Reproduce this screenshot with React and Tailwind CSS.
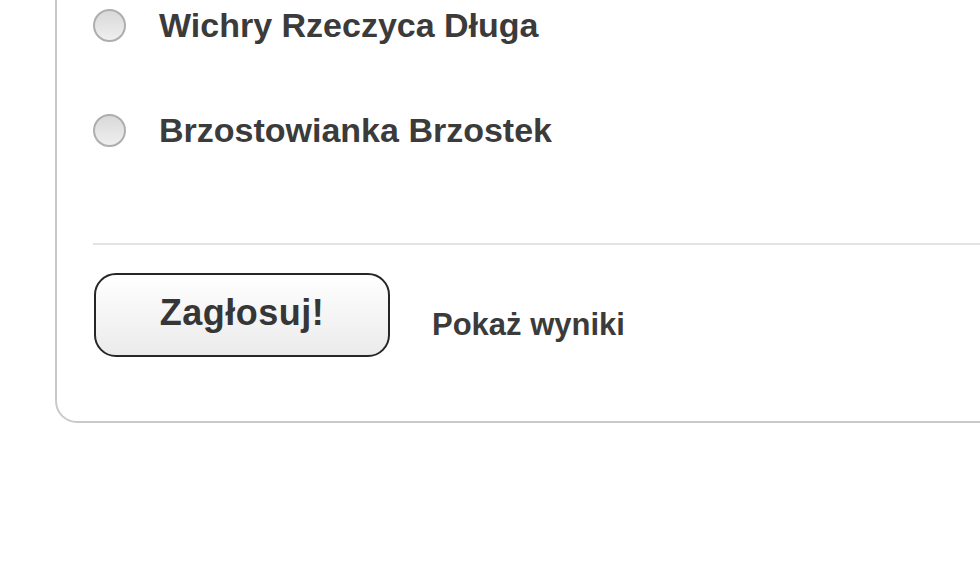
export default function App() {
  const Radio = () => (
    <div className="w-[33px] h-[33px] shrink-0 rounded-full border-2 border-[#aeaeae] bg-gradient-to-b from-[#d9d9d9] to-[#efefef]" />
  );
  return (
    <div
      className="w-[980px] h-[580px] overflow-hidden bg-white"
      style={{ fontFamily: '"Liberation Sans", Arial, sans-serif' }}
    >
      <div className="ml-[55px] w-[1000px] border-2 border-t-0 border-[#c9c9c9] rounded-b-[22px] pl-[36px] pb-[64px]">
        <div className="flex items-center h-[50px]">
          <Radio />
          <span className="ml-[33px] text-[34px] font-bold text-[#3b3b3b] leading-none">
            Wichry Rzeczyca Długa
          </span>
        </div>
        <div className="flex items-center h-[50px] mt-[55px]">
          <Radio />
          <span className="ml-[33px] text-[34px] font-bold text-[#3b3b3b] leading-none">
            Brzostowianka Brzostek
          </span>
        </div>
        <div className="mt-[88px] h-[2px] bg-[#e3e3e3]" />
        <div className="mt-[28px] flex items-start">
          <button className="ml-[1px] w-[296px] h-[84px] rounded-[22px] border-2 border-[#262626] bg-gradient-to-b from-white to-[#ebebeb] text-[36px] font-bold text-[#363636] leading-none pb-[4px] tracking-[0.5px]">
            Zagłosuj!
          </button>
          <span className="ml-[42px] mt-[36px] text-[31px] font-bold text-[#3b3b3b] leading-none">
            Pokaż wyniki
          </span>
        </div>
      </div>
    </div>
  );
}
